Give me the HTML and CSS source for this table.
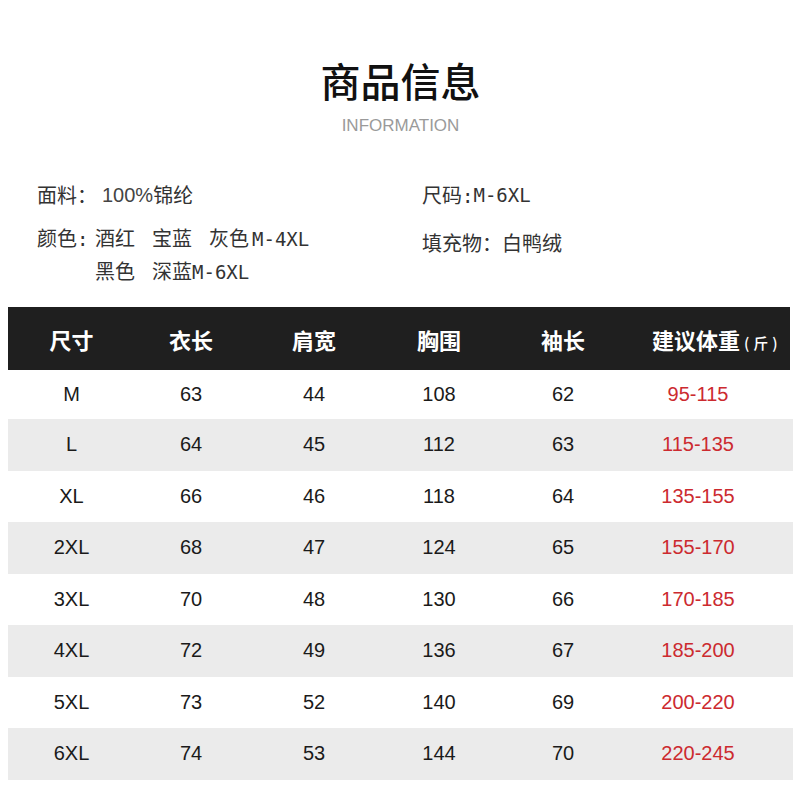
FILE: index.html
```html
<!DOCTYPE html>
<html lang="zh-CN">
<head>
<meta charset="utf-8">
<link rel="stylesheet" href="styles.css">
</head>
<body>
<div class="page">
  <h1 class="title">商品信息</h1>
  <div class="subtitle">INFORMATION</div>

  <div class="info">
    <div class="col col-left">
      <div class="line line-1"><span class="label l-fabric">面料：</span><span class="val-sans">100%</span><span>锦纶</span></div>
      <div class="line line-2">
        <span class="label l-color">颜色<span class="mono">:</span></span>
        <div class="values">
          <div class="vrow"><span>酒红</span><span>宝蓝</span><span>灰色<span class="mono sz">M-4XL</span></span></div>
          <div class="vrow"><span>黑色</span><span>深蓝<span class="mono">M-6XL</span></span></div>
        </div>
      </div>
    </div>
    <div class="col col-right">
      <div class="line line-1"><span class="label">尺码<span class="mono">:</span></span><span class="mono">M-6XL</span></div>
      <div class="line line-2b"><span class="label l-fill">填充物：</span><span>白鸭绒</span></div>
    </div>
  </div>

  <div class="table">
    <div class="row head">
      <div class="cell">尺寸</div>
      <div class="cell">衣长</div>
      <div class="cell">肩宽</div>
      <div class="cell">胸围</div>
      <div class="cell">袖长</div>
      <div class="cell last">建议体重<span class="unit">(斤)</span></div>
    </div>
    <div class="row first"><div class="cell">M</div><div class="cell">63</div><div class="cell">44</div><div class="cell">108</div><div class="cell">62</div><div class="cell red">95-115</div></div>
    <div class="row grey"><div class="cell">L</div><div class="cell">64</div><div class="cell">45</div><div class="cell">112</div><div class="cell">63</div><div class="cell red">115-135</div></div>
    <div class="row"><div class="cell">XL</div><div class="cell">66</div><div class="cell">46</div><div class="cell">118</div><div class="cell">64</div><div class="cell red">135-155</div></div>
    <div class="row grey"><div class="cell">2XL</div><div class="cell">68</div><div class="cell">47</div><div class="cell">124</div><div class="cell">65</div><div class="cell red">155-170</div></div>
    <div class="row"><div class="cell">3XL</div><div class="cell">70</div><div class="cell">48</div><div class="cell">130</div><div class="cell">66</div><div class="cell red">170-185</div></div>
    <div class="row grey"><div class="cell">4XL</div><div class="cell">72</div><div class="cell">49</div><div class="cell">136</div><div class="cell">67</div><div class="cell red">185-200</div></div>
    <div class="row"><div class="cell">5XL</div><div class="cell">73</div><div class="cell">52</div><div class="cell">140</div><div class="cell">69</div><div class="cell red">200-220</div></div>
    <div class="row grey"><div class="cell">6XL</div><div class="cell">74</div><div class="cell">53</div><div class="cell">144</div><div class="cell">70</div><div class="cell red">220-245</div></div>
  </div>
</div>
</body>
</html>
```

FILE: styles.css
```css
* { box-sizing: border-box; }
html, body { margin: 0; padding: 0; background: #fff; }
body {
  width: 800px;
  height: 800px;
  overflow: hidden;
  font-family: "Noto Sans CJK SC", "Liberation Sans", sans-serif;
  color: #222;
}
.page { padding: 0 7px 0 8px; }

.title {
  margin: 56px 0 0;
  font-size: 40px;
  line-height: 48px;
  font-weight: 500;
  text-align: center;
  color: #111;
}
.subtitle {
  margin-top: 12px;
  font-family: "Liberation Sans", sans-serif;
  font-size: 17px;
  line-height: 20px;
  text-align: center;
  color: #9a9a9a;
}

.info {
  display: flex;
  margin-top: 43px;
  font-size: 20px;
  color: #333;
}
.col-left { width: 385px; padding-left: 29px; }
.col-right { padding-left: 29px; }
.line { display: flex; line-height: 32px; white-space: pre; }
.line-2 { margin-top: 11px; }
.line-2b { margin-top: 15px; }
.label { display: inline-block; }
.l-fabric { width: 65px; }
.l-color { width: 58px; }
.mono {
  font-family: "DejaVu Sans Mono", monospace;
  font-size: 19px;
}
.sz { margin-left: 3px; }
.val-sans { font-family: "Liberation Sans", sans-serif; color: #444; }
.values { display: flex; flex-direction: column; }
.vrow { display: flex; gap: 17px; }

.table { margin-top: 19px; width: 785px; }
.row {
  display: grid;
  grid-template-columns: 127px 112px 134px 116px 132px 138px 26px;
  height: 51.5px;
  align-items: center;
  font-family: "Liberation Sans", sans-serif;
  font-size: 20px;
  color: #1a1a1a;
}
.row.first { height: 49px; }
.row.grey { background: #ebebeb; }
.cell { text-align: center; }
.red { color: #cc2a2f; }

.row.head {
  height: 63px;
  background: #1f1f1f;
  color: #fff;
  font-family: "Noto Sans CJK SC", sans-serif;
  font-weight: 700;
  font-size: 22px;
  width: 782px;
}
.row.head .cell.last {
  grid-column: span 2;
  text-align: left;
  padding-left: 23px;
  white-space: nowrap;
}
.unit {
  font-size: 15px;
  font-weight: 500;
  letter-spacing: 4px;
  margin-left: 4px;
}
```
